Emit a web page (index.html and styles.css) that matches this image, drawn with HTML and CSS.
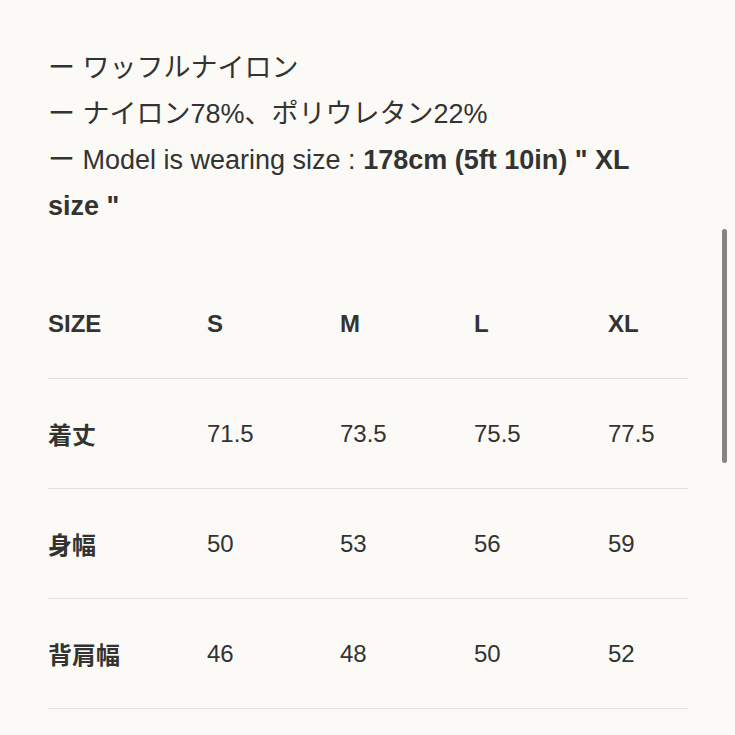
FILE: index.html
```html
<!DOCTYPE html>
<html lang="ja">
<head>
<meta charset="utf-8">
<link rel="stylesheet" href="styles.css">
</head>
<body>
<main class="page">
  <div class="desc">
    <p>ー ワッフルナイロン</p>
    <p>ー ナイロン78%、ポリウレタン22%</p>
    <p>ー Model is wearing size : <strong>178cm (5ft 10in) " XL size "</strong></p>
  </div>
  <div class="table">
    <div class="row head">
      <div class="cell label">SIZE</div>
      <div class="cell">S</div>
      <div class="cell">M</div>
      <div class="cell">L</div>
      <div class="cell">XL</div>
    </div>
    <div class="row">
      <div class="cell label">着丈</div>
      <div class="cell">71.5</div>
      <div class="cell">73.5</div>
      <div class="cell">75.5</div>
      <div class="cell">77.5</div>
    </div>
    <div class="row">
      <div class="cell label">身幅</div>
      <div class="cell">50</div>
      <div class="cell">53</div>
      <div class="cell">56</div>
      <div class="cell">59</div>
    </div>
    <div class="row">
      <div class="cell label">背肩幅</div>
      <div class="cell">46</div>
      <div class="cell">48</div>
      <div class="cell">50</div>
      <div class="cell">52</div>
    </div>
  </div>
</main>
<div class="scrollbar"></div>
</body>
</html>
```
FILE: styles.css
```css
html, body {
  margin: 0;
  padding: 0;
  background: #fbfaf6;
  height: 735px;
  overflow: hidden;
}
body {
  font-family: "Liberation Sans", "Noto Sans CJK JP", sans-serif;
  color: #333331;
}
.page {
  padding: 45px 47px 0 48px;
  width: 640px;
}
.desc {
  width: 630px;
}
.desc p {
  margin: 0;
  font-size: 27px;
  line-height: 46px;
}
.desc strong {
  font-weight: 700;
}
.table {
  margin-top: 40px;
}
.row {
  display: grid;
  grid-template-columns: 159px 133px 134px 134px 80px;
  height: 110px;
  align-items: center;
  border-bottom: 1.5px solid #e2e0dc;
  box-sizing: border-box;
}
.cell {
  font-size: 24px;
}
.head .cell, .cell.label {
  font-weight: 700;
}
.scrollbar {
  position: absolute;
  left: 722px;
  top: 229px;
  width: 5px;
  height: 234px;
  border-radius: 3px;
  background: #858482;
}
```
